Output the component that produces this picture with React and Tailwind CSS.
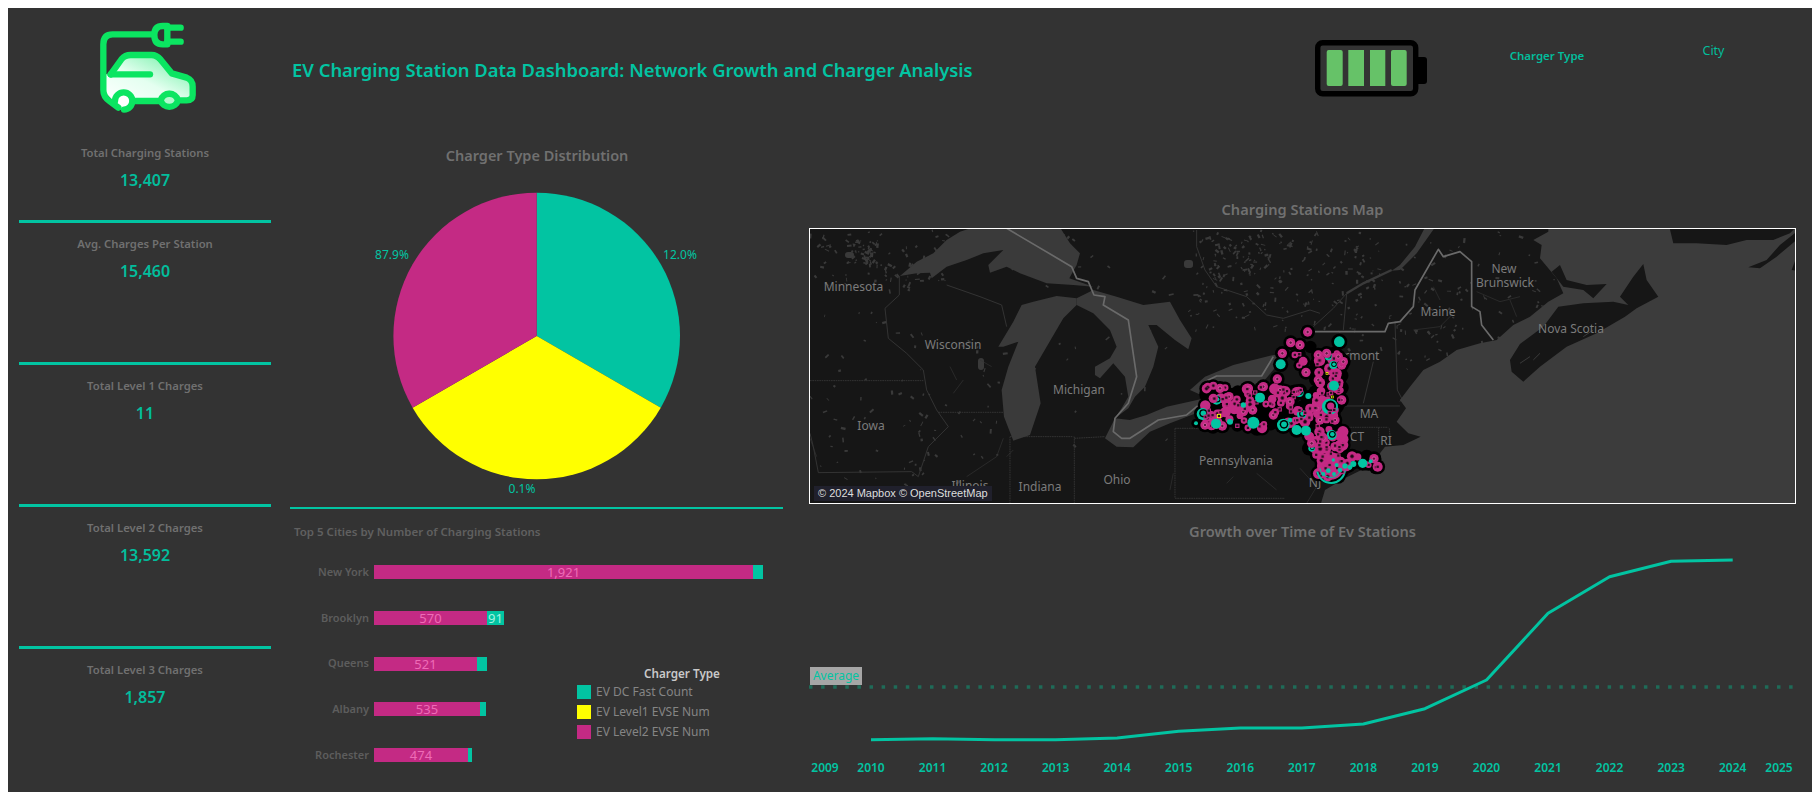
import React from 'react';

const TEAL = '#02c4a2';
const PINK = '#c42a84';

// small seeded generator so the map dots stay the same on every render
const makeRand = (seed) => () => {
  seed = (seed + 0x6d2b79f5) | 0;
  let t = Math.imul(seed ^ (seed >>> 15), 1 | seed);
  t = (t + Math.imul(t ^ (t >>> 7), 61 | t)) ^ t;
  return ((t ^ (t >>> 14)) >>> 0) / 4294967296;
};

const stats = [
  { label: 'Avg. Charges Per Station', value: '15,460' },
  { label: 'Total Level 1 Charges', value: '11' },
  { label: 'Total Level 2 Charges', value: '13,592' },
];

const cities = [
  { name: 'New York', pink: 379, teal: 10, label: '1,921' },
  { name: 'Brooklyn', pink: 113, teal: 17, label: '570', tealLabel: '91' },
  { name: 'Queens', pink: 103, teal: 10, label: '521' },
  { name: 'Albany', pink: 106, teal: 6, label: '535' },
  { name: 'Rochester', pink: 94, teal: 4, label: '474' },
];

const legend = [
  { color: 'bg-[#02c4a2]', label: 'EV DC Fast Count' },
  { color: 'bg-[#ffff00]', label: 'EV Level1 EVSE Num' },
  { color: 'bg-[#c42a84]', label: 'EV Level2 EVSE Num' },
];

const lineY = [739.7, 738.7, 739.7, 739.7, 738, 731.3, 728, 728, 724, 708.7, 680, 613.3, 576.7, 561.3, 560];
const yearX = (i) => 871 + 61.55 * i;

const CarLogo = () => (
  <svg viewBox="0 0 345 315" className="w-[115px] h-[105px]">
    <defs>
      <linearGradient id="carBody" x1="0" y1="1" x2="1" y2="0">
        <stop offset="0" stopColor="#ffffff" />
        <stop offset="0.45" stopColor="#e4fff0" />
        <stop offset="1" stopColor="#62ee9c" />
      </linearGradient>
    </defs>
    <path d="M62 178 L105 125 H190 L245 175 L295 192 L308 215 V245 L285 258 H70 L48 235 V178 Z" fill="url(#carBody)" />
    <circle cx="100" cy="258" r="26" fill="#ffffff" />
    <circle cx="238" cy="252" r="26" fill="#b4f7cf" />
    <g fill="none" stroke="#0be561" strokeWidth="19" strokeLinecap="round" strokeLinejoin="round">
      <path d="M185 58 H68 Q40 58 40 88 V225 Q40 245 58 258 L85 278" />
      <path d="M232 33 H218 Q193 33 193 60 Q193 88 218 88 H232 Z" />
      <path d="M232 38 H272 M232 80 H272" />
      <path d="M62 178 L95 132 Q105 120 122 120 H185 Q200 120 212 134 L245 175 L290 188 Q308 195 308 215 V240 Q308 256 290 256 H272" />
      <path d="M62 178 H180" />
      <path d="M135 258 H208" />
      <path d="M75 258 A26 26 0 0 1 127 258 A26 26 0 0 1 102 284" />
      <path d="M212 256 A27 27 0 0 1 264 256 A27 27 0 0 1 212 256" />
    </g>
  </svg>
);

const Battery = () => (
  <svg viewBox="0 0 114 60" className="w-[114px] h-[60px]">
    <rect x="2.7" y="2.7" width="98" height="51" rx="5" fill="none" stroke="#000" strokeWidth="5.4" />
    <path d="M103 17 H109 Q112 17 112 20 V41 Q112 44 109 44 H103 Z" fill="#000" />
    <rect x="11.7" y="10" width="16" height="36" rx="2" fill="#66c268" />
    <rect x="33.3" y="10" width="15.7" height="36" fill="#66c268" />
    <rect x="55" y="10" width="15.3" height="36" fill="#66c268" />
    <rect x="76" y="10" width="15.7" height="36" rx="2" fill="#66c268" />
  </svg>
);

const Pie = () => {
  const cx = 246.7;
  const cy = 168;
  const r = 143.3;
  const dx = r * Math.sin(Math.PI / 3 * 2);
  const dy = r * 0.5;
  return (
    <svg viewBox="0 0 500 339" className="block w-[500px] h-[339px]">
      <path d={`M${cx} ${cy} L${cx} ${cy - r} A${r} ${r} 0 0 1 ${cx + dx} ${cy + dy} Z`} fill={TEAL} />
      <path d={`M${cx} ${cy} L${cx + dx} ${cy + dy} A${r} ${r} 0 0 1 ${cx - dx} ${cy + dy} Z`} fill="#ffff00" />
      <path d={`M${cx} ${cy} L${cx - dx} ${cy + dy} A${r} ${r} 0 0 1 ${cx} ${cy - r} Z`} fill={PINK} />
      <g fill={TEAL} fontSize="12" textAnchor="middle">
        <text x="102" y="91">87.9%</text>
        <text x="390" y="91">12.0%</text>
        <text x="232" y="325">0.1%</text>
      </g>
    </svg>
  );
};

// dots of the map, in the space of a 3x crop of the New York area
const blobs = [
  [75, 195, 300, 325, 90],
  [300, 205, 420, 315, 44],
  [405, 100, 490, 340, 70],
  [385, 340, 490, 410, 44],
  [415, 410, 490, 470, 18],
  [495, 408, 598, 442, 14],
  [330, 60, 395, 165, 5],
  [50, 275, 100, 325, 6],
];

const rand = makeRand(42);
const dots = [];
blobs.forEach(([x0, y0, x1, y1, count]) => {
  for (let i = 0; i < count; i++) {
    dots.push({ x: x0 + rand() * (x1 - x0), y: y0 + rand() * (y1 - y0), size: rand() });
  }
});

const bigRings = [
  [383, 36], [332, 68], [307, 100], [378, 157], [292, 177], [147, 230], [218, 270], [190, 275], [350, 215], [465, 300], [415, 105],
  [440, 100], [485, 135], [127, 318], [360, 75], [415, 180], [485, 240], [465, 380], [430, 355], [582, 416], [100, 235], [250, 200],
  [475, 110], [490, 125], [205, 205], [120, 205], [300, 210], [410, 265], [420, 300], [395, 370], [75, 315], [280, 285], [330, 245],
];
const teal = [
  [478, 65, 16], [302, 133, 15], [240, 233, 15], [462, 197, 15], [108, 311, 15], [220, 308, 18], [350, 330, 15], [378, 332, 15], [548, 430, 14],
  [150, 305, 9], [48, 310, 6], [190, 255, 8], [385, 228, 9], [330, 300, 7], [520, 432, 9], [572, 424, 6],
  [445, 452, 7], [470, 435, 6], [495, 438, 8], [510, 442, 7], [480, 450, 7], [460, 420, 5], [430, 462, 6], [462, 462, 6],
];
const tealRings = [
  [68, 282, 18], [310, 315, 19], [450, 260, 24], [365, 283, 14], [455, 345, 15], [110, 240, 14], [358, 218, 13], [445, 110, 11], [460, 135, 12], [395, 385, 10],
];

const StationDots = () => (
  <g transform="translate(1180 320) scale(0.3333)">
    {dots.map((d, i) => <circle key={i} cx={d.x} cy={d.y} r={17 + d.size * 7} fill="#000" />)}
    {bigRings.map(([x, y], i) => <circle key={i} cx={x} cy={y} r={22} fill="#000" />)}
    {teal.map(([x, y, r], i) => <circle key={i} cx={x} cy={y} r={r + 8} fill="#000" />)}
    {tealRings.map(([x, y, r], i) => <circle key={i} cx={x} cy={y} r={r + 8} fill="#000" />)}
    <circle cx="452" cy="438" r="48" fill="#000" />
    <circle cx="452" cy="438" r="41" fill={PINK} />
    {dots.map((d, i) =>
      i % 2 === 0 ? <circle key={i} cx={d.x} cy={d.y} r={9 + d.size * 8} fill={PINK} /> : null
    )}
    {dots.map((d, i) =>
      i % 4 === 0 ? <circle key={i} cx={d.x} cy={d.y} r={3 + d.size * 3} fill="#1a0a14" stroke="#7d1b55" strokeWidth="2" /> : null
    )}
    <path d="M412 455 A42 42 0 0 0 495 452" fill="none" stroke={TEAL} strokeWidth="6" />
    <path d="M420 445 A32 32 0 0 0 480 455" fill="none" stroke={TEAL} strokeWidth="3" />
    {tealRings.map(([x, y, r], i) => (
      <g key={i}>
        <circle cx={x} cy={y} r={r} fill={TEAL} />
        <circle cx={x + 2} cy={y - 2} r={r * 0.68} fill="#000" />
        <circle cx={x + 2} cy={y - 2} r={r * 0.45} fill={i === 2 ? PINK : TEAL} />
      </g>
    ))}
    {bigRings.map(([x, y], i) => (
      <g key={i}>
        <circle cx={x} cy={y} r={14} fill={PINK} />
        <circle cx={x} cy={y} r={5} fill="#5e1540" stroke="#ec63b0" strokeWidth="2" />
      </g>
    ))}
    {dots.map((d, i) =>
      i % 3 === 1 ? (
        <rect key={i} x={d.x - 5} y={d.y - 5} width="10" height="10" fill="#2c1021" stroke={PINK} strokeWidth="3" />
      ) : null
    )}
    {teal.map(([x, y, r], i) => <circle key={i} cx={x} cy={y} r={r} fill={TEAL} />)}
    <rect x="112" y="283" width="10" height="10" fill="#111" stroke="#ffff00" strokeWidth="2.5" />
    <rect x="438" y="158" width="6" height="6" fill="#111" stroke="#ffff00" strokeWidth="2" />
    <rect x="454" y="228" width="6" height="6" fill="#111" stroke="#ffff00" strokeWidth="2" />
  </g>
);

// lake and pond flecks on the land
const fleckRand = makeRand(7);
const flecks = [];
[
  [810, 230, 140, 60, 90],
  [850, 240, 30, 25, 40],
  [810, 300, 120, 200, 50],
  [900, 330, 110, 170, 40],
  [1010, 230, 90, 50, 24],
  [1190, 230, 190, 100, 170],
  [1210, 235, 60, 40, 70],
  [1300, 240, 170, 130, 70],
  [1400, 230, 170, 170, 90],
  [1480, 330, 110, 90, 30],
  [1020, 260, 160, 200, 20],
].forEach(([x, y, w, h, count]) => {
  for (let i = 0; i < count; i++) {
    flecks.push({
      x: x + fleckRand() * w,
      y: y + fleckRand() * h,
      w: 1 + fleckRand() * 4,
      h: 0.8 + fleckRand() * 1.6,
      a: fleckRand() * 180,
    });
  }
});

const MapLabel = ({ x, y, children }) => (
  <text x={x} y={y} textAnchor="middle" fontSize="12" fill="#7b7b7b">{children}</text>
);

const StationMap = () => (
  <svg viewBox="810 229 985 274" className="block w-full h-full" preserveAspectRatio="none">
    <rect x="805" y="225" width="1000" height="285" fill="#161616" />
    {flecks.map((f, i) => (
      <rect key={i} x={f.x} y={f.y} width={f.w} height={f.h} fill="#3a3a3a" transform={`rotate(${f.a} ${f.x} ${f.y})`} />
    ))}
    <rect x="845" y="252" width="9" height="6" rx="3" fill="#3a3a3a" />
    <rect x="1184" y="260" width="9" height="8" rx="3" fill="#3a3a3a" />
    <rect x="978" y="358" width="6" height="12" rx="3" fill="#3a3a3a" />

    {/* state lines and rivers */}
    <g transform="translate(800 190) scale(0.3333)" fill="none" stroke="#333" strokeWidth="3">
      <path d="M298 258 V315 L255 355 L265 445 L320 490 L370 540 L380 600 L410 660 L445 710 L385 770 L355 860 L335 845 L55 848 L40 770 L30 730" />
      <path d="M30 572 H370" strokeDasharray="5 2" />
      <path d="M415 667 H610" strokeDasharray="5 2" />
      <path d="M630 740 H820 M630 740 V945 M823 740 V945 M823 745 L915 740" strokeDasharray="5 2" />
      <path d="M1125 715 V925 H1455 M1125 715 H1215" strokeDasharray="5 2" />
      <path d="M1190 120 V170 L1215 240 L1250 290 L1340 320 L1400 375 L1450 385 L1530 360 L1560 370" />
      <path d="M440 285 L540 320 L605 345 L620 410" />
      <path d="M450 530 L470 570 M490 570 L460 610 M540 510 L575 530" strokeWidth="2" />
      <path d="M30 745 L50 800 M610 745 L590 800 L500 860 M1370 850 L1430 900 M1300 860 L1280 880" strokeWidth="2" />
      <path d="M1120 850 L1110 900 M640 780 L620 800" strokeWidth="2" />
    </g>
    <g transform="translate(1300 190) scale(0.3333)" fill="none" stroke="#333" strokeWidth="3">
      <path d="M140 310 L190 280 L275 240" stroke="#3a3a3a" strokeWidth="7" />
      <path d="M40 410 L100 355 L140 310 L130 420" />
      <path d="M285 395 L292 600 L305 625 L300 635 M190 640 L220 515 M135 648 H300" />
      <path d="M130 712 H265 M236 712 V775 M268 715 L272 765" strokeDasharray="5 2" />
      <path d="M530 305 L600 335 L660 320 M630 330 L650 380" strokeWidth="2" />
      <path d="M340 420 L420 410 L460 370 M400 290 L420 330" strokeWidth="2" />
      <path d="M0 835 L50 890 L20 940" strokeWidth="2" />
    </g>

    {/* lakes */}
    <g transform="translate(800 190) scale(0.3333)" fill="#3a3a3a">
      <path d="M300 258 L350 215 L400 190 L440 150 L480 125 L520 112 L780 112 L810 160 L840 190 L830 225 L808 265 L880 290 L820 285 L740 280 L660 250 L620 230 L570 248 L565 225 L610 180 L550 190 L500 210 L440 230 L395 265 L390 248 L350 250 Z" />
      <path d="M595 470 L640 395 L665 345 L700 335 L770 318 L830 325 L830 345 L790 385 L740 470 L705 530 L722 640 L690 735 L640 752 L612 680 L605 600 L625 530 L655 455 L610 470 Z" />
      <path d="M830 325 L880 300 L950 320 L1030 345 L1110 335 L1140 390 L1175 445 L1165 478 L1125 450 L1070 405 L1045 405 L1075 470 L1060 530 L1035 590 L1005 620 L985 655 L965 670 L945 685 L965 655 L985 620 L975 560 L940 520 L900 565 L885 555 L885 530 L930 505 L950 470 L930 420 L880 370 L830 345 Z" />
      <path d="M915 745 L945 685 L990 690 L1040 675 L1100 650 L1215 625 L1200 665 L1110 700 L1050 725 L1000 772 L950 770 Z" />
      <path d="M1170 600 L1215 560 L1300 525 L1420 495 L1440 495 L1420 540 L1390 575 L1300 600 L1215 620 Z" />
    </g>

    {/* ocean and the land in it */}
    <g transform="translate(1300 190) scale(0.3333)">
      <path d="M375 112 L345 170 L300 225 L275 242 L300 240 L350 190 L405 112 Z" fill="#3a3a3a" />
      <path d="M60 950 L75 900 L140 862 L245 810 L240 790 L255 770 L310 765 L362 740 L325 730 L290 695 L318 655 L300 630 L330 590 L370 540 L420 515 L470 480 L540 460 L590 450 L640 405 L690 380 L745 335 L790 310 L770 265 L720 205 L725 165 L700 150 L745 125 L745 110 L1500 110 L1500 950 Z" fill="#3c3c3c" />
      <g fill="#161616">
        <path d="M630 510 L660 462 L730 410 L775 350 L850 340 L940 335 L985 345 L960 320 L1000 260 L1030 222 L1040 270 L1075 320 L1010 355 L975 380 L890 430 L800 470 L720 530 L670 575 L635 545 Z" />
        <path d="M755 245 L780 225 L800 270 L860 285 L920 282 L880 325 L850 300 L790 290 Z" />
        <path d="M1108 110 L1120 160 L1190 160 L1280 165 L1340 150 L1420 150 L1470 130 L1490 110 Z" />
        <path d="M1345 232 L1400 210 L1440 165 L1490 125 L1490 150 L1430 200 L1380 235 Z" />
        <path d="M1475 240 L1490 200 L1490 242 Z" />
      </g>
      <path d="M660 520 L690 500 M720 490 L700 510 M850 440 L880 420" stroke="#3a3a3a" strokeWidth="3" fill="none" />
    </g>

    {/* national border */}
    <g fill="none" stroke="#6a6a6a" strokeLinejoin="round">
      <path transform="translate(800 190) scale(0.3333)" strokeWidth="5" d="M620 115 L815 230 L830 265 L865 275 L882 315 L915 320 L910 345 L985 390 L1010 560 L985 640 L945 685 L940 725 L965 745 L990 745 L1075 690 L1160 675 L1215 630 L1215 575 L1250 558 L1385 558 L1420 500" />
      <path transform="translate(1300 190) scale(0.3333)" strokeWidth="5" d="M45 425 H255 L265 400 L300 395 L340 350 L345 300 L415 178 L430 200 L480 185 L515 215 V350 L540 365 L545 405 L580 450" />
    </g>

    <MapLabel x="853.5" y="291">Minnesota</MapLabel>
    <MapLabel x="953" y="349">Wisconsin</MapLabel>
    <MapLabel x="1079" y="394">Michigan</MapLabel>
    <MapLabel x="871" y="430">Iowa</MapLabel>
    <MapLabel x="970" y="490">Illinois</MapLabel>
    <MapLabel x="1040" y="491">Indiana</MapLabel>
    <MapLabel x="1117" y="484">Ohio</MapLabel>
    <MapLabel x="1236" y="465">Pennsylvania</MapLabel>
    <MapLabel x="1355" y="360">Vermont</MapLabel>
    <MapLabel x="1438" y="316">Maine</MapLabel>
    <MapLabel x="1504" y="273">New</MapLabel>
    <MapLabel x="1505" y="287">Brunswick</MapLabel>
    <MapLabel x="1571" y="333">Nova Scotia</MapLabel>
    <MapLabel x="1369" y="418">MA</MapLabel>
    <MapLabel x="1357" y="441">CT</MapLabel>
    <MapLabel x="1386" y="445">RI</MapLabel>
    <MapLabel x="1315" y="487">NJ</MapLabel>

    <StationDots />
  </svg>
);

const GrowthChart = () => (
  <svg viewBox="790 543 1022 249" className="block w-[1022px] h-[249px]">
    <path d="M809 687 H1796" fill="none" stroke="#1f6b58" strokeWidth="3.5" strokeDasharray="3.5 8.6" />
    <polyline
      points={lineY.map((y, i) => `${yearX(i)},${y}`).join(' ')}
      fill="none"
      stroke={TEAL}
      strokeWidth="3"
      strokeLinejoin="round"
    />
    <rect x="810" y="667" width="52" height="18" fill="#a6a6a6" />
    <text x="836" y="680" textAnchor="middle" fontSize="12" fill={TEAL}>Average</text>
    <g fontSize="12" fontWeight="600" fill={TEAL} textAnchor="middle">
      <text x="825" y="772">2009</text>
      {lineY.map((_, i) => <text key={i} x={yearX(i)} y="772">{2010 + i}</text>)}
      <text x="1779" y="772">2025</text>
    </g>
  </svg>
);

const Stat = ({ label, value, className }) => (
  <div className={`flex flex-col items-center ${className}`}>
    <span className="text-[11.3px] leading-[16px] font-semibold text-[#707070]">{label}</span>
    <span className="mt-[9px] text-[16px] leading-[20px] font-semibold text-[#02bd9c]">{value}</span>
  </div>
);

export default function App() {
  return (
    <div className="bg-white p-2 min-h-screen font-['Noto_Sans',sans-serif]">
      <div className="w-[1804px] h-[784px] bg-[#333333] flex overflow-hidden">
        <div className="w-[282px] pl-[11px] pr-[19px] shrink-0">
          <div className="h-[130px] pt-[7px] pl-[71px]">
            <CarLogo />
          </div>
          <Stat label="Total Charging Stations" value="13,407" className="h-[85px] pt-[7px] border-b-[3px] border-[#02c4a2]" />
          {stats.map((s) => (
            <Stat key={s.label} label={s.label} value={s.value} className="h-[142px] pt-[13px] border-b-[3px] border-[#02c4a2]" />
          ))}
          <Stat label="Total Level 3 Charges" value="1,857" className="pt-[13px]" />
        </div>

        <div className="flex-1 flex flex-col">
          <div className="h-[130px] flex items-start">
            <h1 className="w-[1025px] pl-[2px] pt-[47px] text-[18.4px] leading-[30px] font-semibold text-[#02c4a2]">
              EV Charging Station Data Dashboard: Network Growth and Charger Analysis
            </h1>
            <div className="pt-[32px]">
              <Battery />
            </div>
            <div className="w-[176px] pl-[60px] pt-[38px] text-[11.5px] leading-[20px] font-semibold text-[#02bd9c] text-center">
              Charger Type
            </div>
            <div className="flex-1 pl-[10px] pt-[33px] text-[12.5px] leading-[20px] text-[#02bd9c] text-center">City</div>
          </div>

          <div className="flex-1 flex">
            <div className="w-[500px] shrink-0">
              <h2 className="mt-[5px] pr-[6px] text-[14.5px] leading-[24px] font-semibold text-[#707070] text-center">
                Charger Type Distribution
              </h2>
              <div className="pt-[1px]">
                <Pie />
              </div>
              <div className="w-[493px] border-b-[2px] border-[#02c4a2]" />
              <div className="relative h-[276px]">
                <h3 className="pl-[4px] pt-[15px] text-[11.5px] leading-[16px] font-semibold text-[#606060]">
                  Top 5 Cities by Number of Charging Stations
                </h3>
                <div className="mt-[25px] flex flex-col gap-[31.75px]">
                  {cities.map((c) => (
                    <div key={c.name} className="flex items-center h-[14px]">
                      <span className="w-[79px] text-right text-[11px] font-semibold text-[#5d5d5d]">{c.name}</span>
                      <div
                        className="ml-[5px] h-[14px] bg-[#c42a84] text-center text-[13px] leading-[14px] text-[#ee6cb7]"
                        style={{ width: c.pink }}
                      >
                        {c.label}
                      </div>
                      <div
                        className="h-[14px] bg-[#02c4a2] text-center text-[13px] leading-[14px] text-[#a5f3e2]"
                        style={{ width: c.teal }}
                      >
                        {c.tealLabel}
                      </div>
                    </div>
                  ))}
                </div>
                <div className="absolute left-[287px] top-[155px] text-[12px]">
                  <div className="pl-[67px] leading-[18px] font-semibold text-[11.7px] text-[#c9c9c9]">Charger Type</div>
                  <div className="flex flex-col gap-[6px] mt-[3px]">
                    {legend.map((l) => (
                      <div key={l.label} className="flex items-center gap-[5px] h-[14px] text-[#858585]">
                        <span className={`w-[14px] h-[14px] ${l.color}`} />
                        {l.label}
                      </div>
                    ))}
                  </div>
                </div>
              </div>
            </div>

            <div className="flex-1">
              <h2 className="mt-[59px] ml-[19px] w-[987px] text-[14.6px] leading-[24px] font-semibold text-[#707070] text-center">
                Charging Stations Map
              </h2>
              <div className="relative mt-[7px] ml-[19px] w-[987px] h-[276px] border border-white">
                <StationMap />
                <div className="absolute left-[4px] bottom-[2px] bg-[#20202c] px-[4px] text-[11px] leading-[15px] text-[#dddddd] font-['Liberation_Sans',sans-serif]">
                  © 2024 Mapbox © OpenStreetMap
                </div>
              </div>
              <h2 className="mt-[15px] ml-[19px] w-[987px] text-[14.6px] leading-[24px] font-semibold text-[#707070] text-center">
                Growth over Time of Ev Stations
              </h2>
              <GrowthChart />
            </div>
          </div>
        </div>
      </div>
    </div>
  );
}
